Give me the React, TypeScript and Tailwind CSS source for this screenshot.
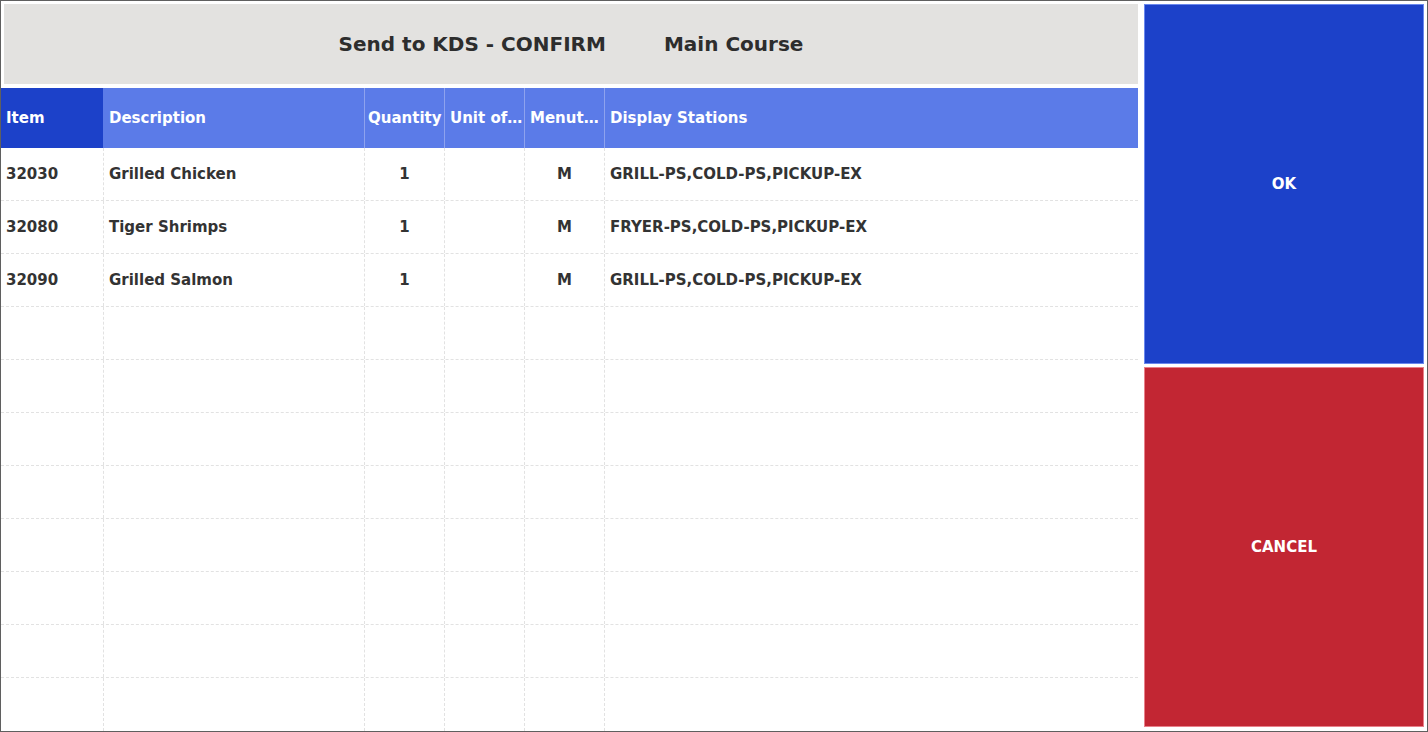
import React from 'react'

type Row = {
    item: string
    description: string
    quantity: string
    unit: string
    menuType: string
    stations: string
}

const rows: Row[] = [
    { item: '32030', description: 'Grilled Chicken', quantity: '1', unit: '', menuType: 'M', stations: 'GRILL-PS,COLD-PS,PICKUP-EX' },
    { item: '32080', description: 'Tiger Shrimps', quantity: '1', unit: '', menuType: 'M', stations: 'FRYER-PS,COLD-PS,PICKUP-EX' },
    { item: '32090', description: 'Grilled Salmon', quantity: '1', unit: '', menuType: 'M', stations: 'GRILL-PS,COLD-PS,PICKUP-EX' },
]

const EMPTY_ROWS = 8
const headCols = 'grid grid-cols-[102px_262px_80px_80px_80px_533px]'
const bodyCols = 'grid grid-cols-[103px_261px_80px_80px_80px_533px]'

const App = () => {
    const allRows: (Row | null)[] = [...rows, ...Array(EMPTY_ROWS).fill(null)]

    return (
        <div
            className="w-[1428px] h-[732px] border border-[#5f5f5f] bg-white flex overflow-hidden text-[#333]"
            style={{ fontFamily: '"DejaVu Sans", Verdana, sans-serif' }}
        >
            {/* left side: title + grid */}
            <div className="w-[1137px] flex flex-col pt-[3px]">
                <div className="ml-[3px] h-[80px] bg-[#e3e2e0] flex items-center justify-center gap-[58px] text-[20px] font-bold text-[#2d2d2d]">
                    <span>Send to KDS - CONFIRM</span>
                    <span>Main Course</span>
                </div>

                <div className={`${headCols} mt-[4px] h-[60px] bg-[#5b7be8] text-white text-[15px] font-bold`}>
                    <div className="bg-[#1c41c9] flex items-center px-[5px]">Item</div>
                    <div className="flex items-center px-[6px] border-r border-[#8ea2ee]">Description</div>
                    <div className="flex items-center px-[3px] border-r border-[#8ea2ee] overflow-hidden whitespace-nowrap">Quantity</div>
                    <div className="flex items-center px-[5px] border-r border-[#8ea2ee] overflow-hidden whitespace-nowrap">Unit of…</div>
                    <div className="flex items-center px-[5px] border-r border-[#8ea2ee] overflow-hidden whitespace-nowrap">Menut…</div>
                    <div className="flex items-center px-[5px]">Display Stations</div>
                </div>

                <div className="flex-1 flex flex-col">
                    {allRows.map((r, i) => (
                        <div
                            key={i}
                            className={`${bodyCols} h-[53px] shrink-0 text-[15px] font-bold ${i < allRows.length - 1 ? 'border-b border-dashed border-[#e2e2e2]' : ''}`}
                        >
                            <div className="flex items-center px-[5px] border-r border-dashed border-[#e2e2e2]">{r?.item}</div>
                            <div className="flex items-center px-[5px] border-r border-dashed border-[#e2e2e2]">{r?.description}</div>
                            <div className="flex items-center justify-center border-r border-dashed border-[#e2e2e2]">{r?.quantity}</div>
                            <div className="flex items-center justify-center border-r border-dashed border-[#e2e2e2]">{r?.unit}</div>
                            <div className="flex items-center justify-center border-r border-dashed border-[#e2e2e2]">{r?.menuType}</div>
                            <div className="flex items-center px-[5px]">{r?.stations}</div>
                        </div>
                    ))}
                </div>
            </div>

            {/* right side: buttons */}
            <div className="flex-1 flex flex-col gap-[3px] pl-[6px] pr-[3px] pt-[3px] pb-[4px]">
                <button className="flex-1 bg-[#1c41c9] border border-[#6a88ee] text-white text-[15px] font-bold">
                    OK
                </button>
                <button className="flex-1 bg-[#c22633] border border-[#e9808a] text-white text-[15px] font-bold">
                    CANCEL
                </button>
            </div>
        </div>
    )
}

export default App
